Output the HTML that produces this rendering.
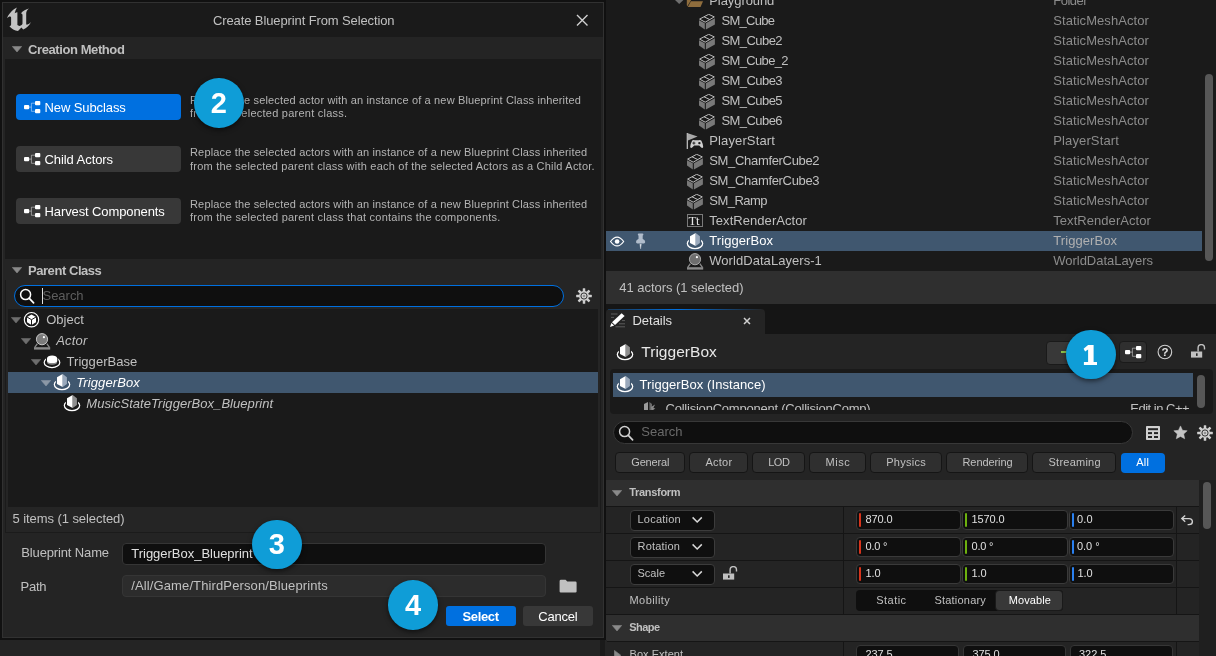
<!DOCTYPE html>
<html><head><meta charset="utf-8"><title>Create Blueprint From Selection</title>
<style>
html,body{margin:0;padding:0;background:#151515;}
#root{position:relative;width:1216px;height:656px;overflow:hidden;font-family:"Liberation Sans",sans-serif;}
#root div,#root span,#root svg{position:absolute;box-sizing:border-box;}
#root span{white-space:nowrap;line-height:1;}
</style></head><body><div id="root">
<div style="left:0px;top:0px;width:1216px;height:656px;background:#151515;"></div>
<div style="left:606px;top:0px;width:610px;height:271px;background:#1a1a1a;"></div>
<div style="left:606px;top:231px;width:596px;height:20px;background:#40576f;"></div>
<div style="left:1205px;top:74px;width:8px;height:187px;background:#575757;border-radius:4px;"></div>
<div style="left:606px;top:271px;width:610px;height:33px;background:#2f2f2f;"></div>
<div style="left:606px;top:304px;width:610px;height:30px;background:#151515;"></div>
<div style="left:606px;top:309px;width:159px;height:25px;background:#242424;border-radius:4px 4px 0 0;"></div>
<div style="left:608px;top:309px;width:155px;height:1.2px;background:linear-gradient(90deg,rgba(0,112,224,.25),#0070e0 45%,rgba(0,112,224,0));"></div>
<div style="left:606px;top:334px;width:610px;height:322px;background:#242424;"></div>
<div style="left:609.5px;top:369px;width:603.5px;height:45px;background:#1a1a1a;border-radius:4px;"></div>
<div style="left:613px;top:373px;width:580px;height:24px;background:#40576f;"></div>
<div style="left:1197px;top:375px;width:8px;height:33px;background:#575757;border-radius:4px;"></div>
<div style="left:1046px;top:341px;width:60px;height:24px;background:#383838;border-radius:4px;border:1px solid #1a1a1a;"></div>
<div style="left:1119px;top:341px;width:28px;height:22px;background:#2f2f2f;border-radius:4px;border:1px solid #1a1a1a;"></div>
<div style="left:613px;top:421.3px;width:519.5px;height:22.5px;background:#0f0f0f;border-radius:12px;border:1px solid #383838;"></div>
<div style="left:615px;top:452px;width:70px;height:21px;background:#2f2f2f;border-radius:4px;border:1px solid #151515;"></div>
<div style="left:689px;top:452px;width:59px;height:21px;background:#2f2f2f;border-radius:4px;border:1px solid #151515;"></div>
<div style="left:752px;top:452px;width:53px;height:21px;background:#2f2f2f;border-radius:4px;border:1px solid #151515;"></div>
<div style="left:809px;top:452px;width:57px;height:21px;background:#2f2f2f;border-radius:4px;border:1px solid #151515;"></div>
<div style="left:870px;top:452px;width:72px;height:21px;background:#2f2f2f;border-radius:4px;border:1px solid #151515;"></div>
<div style="left:946px;top:452px;width:82px;height:21px;background:#2f2f2f;border-radius:4px;border:1px solid #151515;"></div>
<div style="left:1032px;top:452px;width:84px;height:21px;background:#2f2f2f;border-radius:4px;border:1px solid #151515;"></div>
<div style="left:1120.5px;top:452.6px;width:44.0px;height:20px;background:#0070e0;border-radius:4px;"></div>
<div style="left:606px;top:480px;width:593px;height:176px;background:#151515;"></div>
<div style="left:606px;top:480px;width:593px;height:26px;background:#2f2f2f;"></div>
<div style="left:606px;top:507px;width:237px;height:26px;background:#242424;"></div>
<div style="left:844px;top:507px;width:332px;height:26px;background:#242424;"></div>
<div style="left:1177px;top:507px;width:22px;height:26px;background:#242424;"></div>
<div style="left:606px;top:534px;width:237px;height:26px;background:#242424;"></div>
<div style="left:844px;top:534px;width:332px;height:26px;background:#242424;"></div>
<div style="left:1177px;top:534px;width:22px;height:26px;background:#242424;"></div>
<div style="left:606px;top:561px;width:237px;height:26px;background:#242424;"></div>
<div style="left:844px;top:561px;width:332px;height:26px;background:#242424;"></div>
<div style="left:1177px;top:561px;width:22px;height:26px;background:#242424;"></div>
<div style="left:606px;top:588px;width:237px;height:26px;background:#242424;"></div>
<div style="left:844px;top:588px;width:332px;height:26px;background:#242424;"></div>
<div style="left:1177px;top:588px;width:22px;height:26px;background:#242424;"></div>
<div style="left:606px;top:615px;width:593px;height:26px;background:#2f2f2f;"></div>
<div style="left:606px;top:642px;width:237px;height:14px;background:#242424;"></div>
<div style="left:844px;top:642px;width:332px;height:14px;background:#242424;"></div>
<div style="left:1177px;top:642px;width:22px;height:14px;background:#242424;"></div>
<div style="left:1199px;top:480px;width:17px;height:176px;background:#1f1f1f;"></div>
<div style="left:1203px;top:482px;width:8px;height:47px;background:#575757;border-radius:4px;"></div>
<div style="left:604px;top:0px;width:2.2px;height:656px;background:#101010;"></div>
<div style="left:629.5px;top:509.5px;width:85px;height:21px;background:#0f0f0f;border-radius:4px;border:1px solid #3c3c3c;"></div>
<div style="left:629.5px;top:536.5px;width:85px;height:21px;background:#0f0f0f;border-radius:4px;border:1px solid #3c3c3c;"></div>
<div style="left:629.5px;top:563.5px;width:85px;height:21px;background:#0f0f0f;border-radius:4px;border:1px solid #3c3c3c;"></div>
<div style="left:855.8px;top:510px;width:105.5px;height:20px;background:#0f0f0f;border-radius:4px;border:1px solid #3a3a3a;"></div>
<div style="left:858.5999999999999px;top:513.2px;width:2.2px;height:13.4px;background:#d8341c;border-radius:1px;"></div>
<div style="left:962.4px;top:510px;width:105.19999999999993px;height:20px;background:#0f0f0f;border-radius:4px;border:1px solid #3a3a3a;"></div>
<div style="left:965.1999999999999px;top:513.2px;width:2.2px;height:13.4px;background:#6db10e;border-radius:1px;"></div>
<div style="left:1068.8px;top:510px;width:105.0px;height:20px;background:#0f0f0f;border-radius:4px;border:1px solid #3a3a3a;"></div>
<div style="left:1071.6px;top:513.2px;width:2.2px;height:13.4px;background:#2a80f0;border-radius:1px;"></div>
<div style="left:855.8px;top:537px;width:105.5px;height:20px;background:#0f0f0f;border-radius:4px;border:1px solid #3a3a3a;"></div>
<div style="left:858.5999999999999px;top:540.2px;width:2.2px;height:13.4px;background:#d8341c;border-radius:1px;"></div>
<div style="left:962.4px;top:537px;width:105.19999999999993px;height:20px;background:#0f0f0f;border-radius:4px;border:1px solid #3a3a3a;"></div>
<div style="left:965.1999999999999px;top:540.2px;width:2.2px;height:13.4px;background:#6db10e;border-radius:1px;"></div>
<div style="left:1068.8px;top:537px;width:105.0px;height:20px;background:#0f0f0f;border-radius:4px;border:1px solid #3a3a3a;"></div>
<div style="left:1071.6px;top:540.2px;width:2.2px;height:13.4px;background:#2a80f0;border-radius:1px;"></div>
<div style="left:855.8px;top:564px;width:105.5px;height:20px;background:#0f0f0f;border-radius:4px;border:1px solid #3a3a3a;"></div>
<div style="left:858.5999999999999px;top:567.2px;width:2.2px;height:13.4px;background:#d8341c;border-radius:1px;"></div>
<div style="left:962.4px;top:564px;width:105.19999999999993px;height:20px;background:#0f0f0f;border-radius:4px;border:1px solid #3a3a3a;"></div>
<div style="left:965.1999999999999px;top:567.2px;width:2.2px;height:13.4px;background:#6db10e;border-radius:1px;"></div>
<div style="left:1068.8px;top:564px;width:105.0px;height:20px;background:#0f0f0f;border-radius:4px;border:1px solid #3a3a3a;"></div>
<div style="left:1071.6px;top:567.2px;width:2.2px;height:13.4px;background:#2a80f0;border-radius:1px;"></div>
<div style="left:856px;top:645px;width:103px;height:20px;background:#0f0f0f;border-radius:4px;border:1px solid #363636;"></div>
<div style="left:963px;top:645px;width:103px;height:20px;background:#0f0f0f;border-radius:4px;border:1px solid #363636;"></div>
<div style="left:1070px;top:645px;width:103px;height:20px;background:#0f0f0f;border-radius:4px;border:1px solid #363636;"></div>
<div style="left:856px;top:590px;width:207px;height:21px;background:#0f0f0f;border-radius:4px;"></div>
<div style="left:995px;top:590px;width:68px;height:21px;background:#383838;border-radius:4px;border:1px solid #1a1a1a;"></div>
<div style="left:0px;top:0px;width:604px;height:640px;background:#111111;"></div>
<div style="left:0px;top:640px;width:606.5px;height:16px;background:#242424;"></div>
<div style="left:600px;top:640px;width:5px;height:16px;background:#1a1a1a;"></div>
<div style="left:2px;top:2px;width:602px;height:636px;background:#313131;"></div>
<div style="left:3px;top:3px;width:600px;height:634px;background:#242424;"></div>
<div style="left:3px;top:3px;width:600px;height:34px;background:#1a1a1a;"></div>
<div style="left:5px;top:37px;width:596px;height:22px;background:#242424;"></div>
<div style="left:5px;top:59px;width:596px;height:200px;background:#1a1a1a;"></div>
<div style="left:5px;top:259px;width:596px;height:21px;background:#242424;"></div>
<div style="left:5px;top:280px;width:596px;height:253px;background:#252525;border:1px solid #1b1b1b;border-top:none;"></div>
<div style="left:8px;top:309px;width:590px;height:198px;background:#1a1a1a;"></div>
<div style="left:8px;top:372px;width:590px;height:21px;background:#40576f;"></div>
<div style="left:14px;top:284.6px;width:550px;height:22.4px;background:#0f0f0f;border-radius:12px;border:1px solid #0070e0;"></div>
<div style="left:42px;top:288px;width:1px;height:15.5px;background:#e0e0e0;"></div>
<div style="left:16px;top:94px;width:165px;height:26px;background:#0070e0;border-radius:4px;"></div>
<div style="left:16px;top:146px;width:165px;height:26px;background:#383838;border-radius:4px;"></div>
<div style="left:16px;top:198px;width:165px;height:26px;background:#383838;border-radius:4px;"></div>
<div style="left:122px;top:543px;width:424px;height:22px;background:#0f0f0f;border-radius:4px;border:1px solid #353535;"></div>
<div style="left:122px;top:575px;width:424px;height:22px;background:#2c2c2c;border-radius:4px;border:1px solid #353535;"></div>
<div style="left:446px;top:605.6px;width:70px;height:20.6px;background:#0070e0;border-radius:3px;"></div>
<div style="left:522.5px;top:605.6px;width:70.5px;height:20.6px;background:#383838;border-radius:3px;"></div>
<div style="left:687px;top:214px;width:16px;height:13px;background:transparent;border:1px solid #7a7a7a;"></div>
<div style="left:1061px;top:351px;width:12px;height:1.6px;background:#8bc24a;"></div>
<div style="left:0;top:0;width:1216px;height:656px;will-change:transform;">
<span style="left:709.25px;top:-6.00px;font-size:13px;color:#c0c0c0;letter-spacing:-0.076px;">Playground</span>
<span style="left:1053.25px;top:-6.00px;font-size:13px;color:#8c8c8c;letter-spacing:-0.502px;">Folder</span>
<span style="left:721.50px;top:14.00px;font-size:13px;color:#c0c0c0;letter-spacing:-0.702px;">SM_Cube</span>
<span style="left:1053.25px;top:14.00px;font-size:13px;color:#8c8c8c;letter-spacing:0.067px;">StaticMeshActor</span>
<span style="left:721.50px;top:34.00px;font-size:13px;color:#c0c0c0;letter-spacing:-0.564px;">SM_Cube2</span>
<span style="left:1053.25px;top:34.00px;font-size:13px;color:#8c8c8c;letter-spacing:0.067px;">StaticMeshActor</span>
<span style="left:721.50px;top:54.00px;font-size:13px;color:#c0c0c0;letter-spacing:-0.648px;">SM_Cube_2</span>
<span style="left:1053.25px;top:54.00px;font-size:13px;color:#8c8c8c;letter-spacing:0.067px;">StaticMeshActor</span>
<span style="left:721.50px;top:74.00px;font-size:13px;color:#c0c0c0;letter-spacing:-0.564px;">SM_Cube3</span>
<span style="left:1053.25px;top:74.00px;font-size:13px;color:#8c8c8c;letter-spacing:0.067px;">StaticMeshActor</span>
<span style="left:721.50px;top:94.00px;font-size:13px;color:#c0c0c0;letter-spacing:-0.564px;">SM_Cube5</span>
<span style="left:1053.25px;top:94.00px;font-size:13px;color:#8c8c8c;letter-spacing:0.067px;">StaticMeshActor</span>
<span style="left:721.50px;top:114.00px;font-size:13px;color:#c0c0c0;letter-spacing:-0.564px;">SM_Cube6</span>
<span style="left:1053.25px;top:114.00px;font-size:13px;color:#8c8c8c;letter-spacing:0.067px;">StaticMeshActor</span>
<span style="left:709.25px;top:134.00px;font-size:13px;color:#c0c0c0;letter-spacing:0.129px;">PlayerStart</span>
<span style="left:1053.25px;top:134.00px;font-size:13px;color:#8c8c8c;letter-spacing:0.129px;">PlayerStart</span>
<span style="left:709.25px;top:154.00px;font-size:13px;color:#c0c0c0;letter-spacing:-0.324px;">SM_ChamferCube2</span>
<span style="left:1053.25px;top:154.00px;font-size:13px;color:#8c8c8c;letter-spacing:0.067px;">StaticMeshActor</span>
<span style="left:709.25px;top:174.00px;font-size:13px;color:#c0c0c0;letter-spacing:-0.324px;">SM_ChamferCube3</span>
<span style="left:1053.25px;top:174.00px;font-size:13px;color:#8c8c8c;letter-spacing:0.067px;">StaticMeshActor</span>
<span style="left:709.25px;top:194.00px;font-size:13px;color:#c0c0c0;letter-spacing:-0.512px;">SM_Ramp</span>
<span style="left:1053.25px;top:194.00px;font-size:13px;color:#8c8c8c;letter-spacing:0.067px;">StaticMeshActor</span>
<span style="left:709.25px;top:214.00px;font-size:13px;color:#c0c0c0;letter-spacing:0.055px;">TextRenderActor</span>
<span style="left:1053.25px;top:214.00px;font-size:13px;color:#8c8c8c;letter-spacing:0.055px;">TextRenderActor</span>
<span style="left:709.25px;top:234.00px;font-size:13px;color:#ffffff;letter-spacing:0.082px;">TriggerBox</span>
<span style="left:1053.25px;top:234.00px;font-size:13px;color:#b0b0b0;letter-spacing:0.082px;">TriggerBox</span>
<span style="left:709.25px;top:254.00px;font-size:13px;color:#c0c0c0;letter-spacing:0.052px;">WorldDataLayers-1</span>
<span style="left:1053.25px;top:254.00px;font-size:13px;color:#8c8c8c;letter-spacing:-0.025px;">WorldDataLayers</span>
<span style="left:619.25px;top:281.00px;font-size:13px;color:#c0c0c0;letter-spacing:-0.032px;">41 actors (1 selected)</span>
<span style="left:632.50px;top:314.00px;font-size:13px;color:#e0e0e0;letter-spacing:-0.025px;">Details</span>
<span style="left:641.25px;top:344.00px;font-size:15.5px;color:#e8e8e8;letter-spacing:0.041px;">TriggerBox</span>
<span style="left:639.50px;top:378.00px;font-size:13px;color:#ffffff;letter-spacing:0.079px;">TriggerBox (Instance)</span>
<div style="left:610px;top:397px;width:590px;height:12.5px;overflow:hidden;"><span style="left:55.50px;top:5.00px;font-size:13px;color:#c0c0c0;letter-spacing:-0.222px;">CollisionComponent (CollisionComp)</span></div>
<div style="left:1100px;top:397px;width:95px;height:12.5px;overflow:hidden;"><span style="left:30.25px;top:5.00px;font-size:13px;color:#c0c0c0;letter-spacing:-0.498px;">Edit in C++</span></div>
<span style="left:641.25px;top:425.00px;font-size:13px;color:#6a6a6a;letter-spacing:0.029px;">Search</span>
<span style="left:631.25px;top:457.00px;font-size:11px;color:#c0c0c0;letter-spacing:-0.173px;">General</span>
<span style="left:705.50px;top:457.00px;font-size:11px;color:#c0c0c0;letter-spacing:0.228px;">Actor</span>
<span style="left:768.25px;top:457.00px;font-size:11px;color:#c0c0c0;letter-spacing:-0.512px;">LOD</span>
<span style="left:825.50px;top:457.00px;font-size:11px;color:#c0c0c0;letter-spacing:0.580px;">Misc</span>
<span style="left:886.25px;top:457.00px;font-size:11px;color:#c0c0c0;letter-spacing:0.282px;">Physics</span>
<span style="left:962.50px;top:457.00px;font-size:11px;color:#c0c0c0;letter-spacing:-0.083px;">Rendering</span>
<span style="left:1048.50px;top:457.00px;font-size:11px;color:#c0c0c0;letter-spacing:0.245px;">Streaming</span>
<span style="left:1136.25px;top:457.00px;font-size:11px;color:#ffffff;letter-spacing:0.183px;">All</span>
<span style="left:629.25px;top:487.00px;font-size:11px;color:#c0c0c0;font-weight:bold;letter-spacing:-0.306px;">Transform</span>
<span style="left:637.50px;top:514.00px;font-size:11px;color:#c0c0c0;letter-spacing:0.215px;">Location</span>
<span style="left:637.50px;top:541.00px;font-size:11px;color:#c0c0c0;letter-spacing:0.195px;">Rotation</span>
<span style="left:637.50px;top:568.00px;font-size:11px;color:#c0c0c0;letter-spacing:0.017px;">Scale</span>
<span style="left:629.50px;top:595.00px;font-size:11px;color:#c0c0c0;letter-spacing:0.436px;">Mobility</span>
<span style="left:629.25px;top:622.00px;font-size:11px;color:#c0c0c0;font-weight:bold;letter-spacing:-0.541px;">Shape</span>
<span style="left:629.50px;top:649.00px;font-size:11px;color:#c0c0c0;letter-spacing:0.044px;">Box Extent</span>
<span style="left:865.50px;top:514.00px;font-size:11px;color:#e0e0e0;letter-spacing:-0.108px;">870.0</span>
<span style="left:971.50px;top:514.00px;font-size:11px;color:#e0e0e0;letter-spacing:-0.111px;">1570.0</span>
<span style="left:1077.00px;top:514.00px;font-size:11px;color:#e0e0e0;letter-spacing:0.152px;">0.0</span>
<span style="left:865.50px;top:541.00px;font-size:11px;color:#e0e0e0;letter-spacing:-0.225px;">0.0 °</span>
<span style="left:971.50px;top:541.00px;font-size:11px;color:#e0e0e0;letter-spacing:-0.225px;">0.0 °</span>
<span style="left:1077.00px;top:541.00px;font-size:11px;color:#e0e0e0;letter-spacing:-0.037px;">0.0 °</span>
<span style="left:865.50px;top:568.00px;font-size:11px;color:#e0e0e0;letter-spacing:-0.098px;">1.0</span>
<span style="left:971.50px;top:568.00px;font-size:11px;color:#e0e0e0;letter-spacing:-0.098px;">1.0</span>
<span style="left:1077.50px;top:568.00px;font-size:11px;color:#e0e0e0;letter-spacing:-0.098px;">1.0</span>
<span style="left:876.25px;top:595.00px;font-size:11px;color:#c0c0c0;letter-spacing:0.467px;">Static</span>
<span style="left:934.50px;top:595.00px;font-size:11px;color:#c0c0c0;letter-spacing:0.202px;">Stationary</span>
<span style="left:1008.75px;top:595.00px;font-size:11px;color:#ffffff;letter-spacing:0.087px;">Movable</span>
<span style="left:865.50px;top:649.00px;font-size:11px;color:#e0e0e0;letter-spacing:-0.108px;">237.5</span>
<span style="left:972.50px;top:649.00px;font-size:11px;color:#e0e0e0;letter-spacing:-0.108px;">375.0</span>
<span style="left:1079.00px;top:649.00px;font-size:11px;color:#e0e0e0;letter-spacing:-0.045px;">322.5</span>
<span style="left:213.00px;top:14.00px;font-size:13px;color:#c0c0c0;letter-spacing:-0.113px;">Create Blueprint From Selection</span>
<span style="left:28.00px;top:43.00px;font-size:13px;color:#c0c0c0;font-weight:bold;letter-spacing:-0.408px;">Creation Method</span>
<span style="left:44.50px;top:101.00px;font-size:13px;color:#ffffff;letter-spacing:-0.093px;">New Subclass</span>
<span style="left:44.50px;top:153.00px;font-size:13px;color:#ffffff;letter-spacing:-0.070px;">Child Actors</span>
<span style="left:44.50px;top:205.00px;font-size:13px;color:#ffffff;letter-spacing:-0.104px;">Harvest Components</span>
<span style="left:190.00px;top:95.00px;font-size:11px;color:#b4b4b4;letter-spacing:0.152px;">Replace the selected actor with an instance of a new Blueprint Class inherited</span>
<span style="left:190.00px;top:108.00px;font-size:11px;color:#b4b4b4;letter-spacing:0.243px;">from the selected parent class.</span>
<span style="left:190.00px;top:147.00px;font-size:11px;color:#b4b4b4;letter-spacing:0.160px;">Replace the selected actors with an instance of a new Blueprint Class inherited</span>
<span style="left:190.00px;top:161.00px;font-size:11px;color:#b4b4b4;letter-spacing:0.219px;">from the selected parent class with each of the selected Actors as a Child Actor.</span>
<span style="left:190.00px;top:199.00px;font-size:11px;color:#b4b4b4;letter-spacing:0.160px;">Replace the selected actors with an instance of a new Blueprint Class inherited</span>
<span style="left:190.00px;top:212.00px;font-size:11px;color:#b4b4b4;letter-spacing:0.234px;">from the selected parent class that contains the components.</span>
<span style="left:28.00px;top:264.00px;font-size:13px;color:#c0c0c0;font-weight:bold;letter-spacing:-0.447px;">Parent Class</span>
<span style="left:42.50px;top:289.00px;font-size:13px;color:#5e5e5e;letter-spacing:-0.021px;">Search</span>
<span style="left:46.25px;top:313.00px;font-size:13px;color:#c0c0c0;letter-spacing:0.004px;">Object</span>
<span style="left:56.25px;top:334.00px;font-size:13px;color:#c0c0c0;font-style:italic;letter-spacing:0.189px;">Actor</span>
<span style="left:66.50px;top:355.00px;font-size:13px;color:#c0c0c0;letter-spacing:0.052px;">TriggerBase</span>
<span style="left:76.25px;top:376.00px;font-size:13px;color:#ffffff;font-style:italic;letter-spacing:0.108px;">TriggerBox</span>
<span style="left:86.25px;top:397.00px;font-size:13px;color:#c0c0c0;font-style:italic;letter-spacing:0.048px;">MusicStateTriggerBox_Blueprint</span>
<span style="left:12.50px;top:512.00px;font-size:13px;color:#c0c0c0;letter-spacing:-0.070px;">5 items (1 selected)</span>
<span style="left:21.25px;top:546.00px;font-size:13px;color:#c0c0c0;letter-spacing:-0.135px;">Blueprint Name</span>
<span style="left:131.25px;top:547.00px;font-size:13px;color:#e0e0e0;letter-spacing:-0.015px;">TriggerBox_Blueprint</span>
<span style="left:20.50px;top:580.00px;font-size:13px;color:#c0c0c0;letter-spacing:-0.217px;">Path</span>
<span style="left:131.25px;top:579.00px;font-size:13px;color:#c0c0c0;letter-spacing:0.119px;">/All/Game/ThirdPerson/Blueprints</span>
<span style="left:462.50px;top:610.00px;font-size:13px;color:#ffffff;font-weight:bold;letter-spacing:-0.342px;">Select</span>
<span style="left:538.25px;top:610.00px;font-size:13px;color:#ffffff;letter-spacing:-0.224px;">Cancel</span>
</div>
<div style="left:0;top:0;width:1216px;height:656px;will-change:transform;">
<div style="left:1066.2px;top:329.9px;width:49.6px;height:49.6px;border-radius:50%;background:#0f9dd7;box-shadow:0 2px 5px rgba(0,0,0,.55);"></div>
<svg style="left:1081px;top:342.7px;" width="20" height="24" viewBox="-10 -12 20 24"><path d="M-2.9 -10 H2.6 V7 H6 V10 H-7.1 V7 H-2.9 V-5.6 L-5.9 -3.4 L-7.4 -6.2 Z" fill="#fff"/></svg>
<div style="left:194.0px;top:78.2px;width:49.6px;height:49.6px;border-radius:50%;background:#0f9dd7;box-shadow:0 2px 5px rgba(0,0,0,.55);"></div>
<span style="left:198.8px;top:89px;width:40px;text-align:center;font-size:29px;font-weight:bold;color:#fff;">2</span>
<div style="left:252.09999999999997px;top:519.6px;width:49.6px;height:49.6px;border-radius:50%;background:#0f9dd7;box-shadow:0 2px 5px rgba(0,0,0,.55);"></div>
<span style="left:256.9px;top:530px;width:40px;text-align:center;font-size:29px;font-weight:bold;color:#fff;">3</span>
<div style="left:388.2px;top:580.2px;width:49.6px;height:49.6px;border-radius:50%;background:#0f9dd7;box-shadow:0 2px 5px rgba(0,0,0,.55);"></div>
<span style="left:393px;top:591px;width:40px;text-align:center;font-size:29px;font-weight:bold;color:#fff;">4</span>
<svg style="left:6px;top:6px;" width="27" height="27" viewBox="0 0 27 27"><g fill="#c4c4c4"><path d="M10.9 1.6 C7.6 3 3.6 6.8 1 12 C2.2 11 3.2 10.3 4.2 10.4 C4.9 10.5 5.1 11 5.1 11.8 L5.1 18.2 C5.1 19.3 4.6 19.9 3.4 20.3 C5.6 23 8.6 24.6 12 25 L15.4 21.6 L17.2 23.4 C20.6 22 23.4 19.6 25 16 C23.8 17.3 22.6 18.2 21.5 18.6 C20.6 18.9 20.2 18.3 20.2 17.4 L20.2 7.6 C20.2 5.6 21.2 4 23 2.6 C20 3.2 17.2 4.8 14.8 7.4 C15.9 7.4 16.5 7.9 16.5 9 L16.5 17.6 C16.5 18.7 15.2 19.9 13.6 19.9 C12.5 19.9 12 19.6 11.4 19.1 L11.4 6.2 C10.6 6.2 9.6 6.6 8.7 7.2 C9.2 5.2 9.9 3.2 10.9 1.6 Z"/></g></svg>
<svg style="left:575.75px;top:13.75px;" width="12.5" height="12.5" viewBox="0 0 12.5 12.5"><path d="M1 1 L11.5 11.5 M11.5 1 L1 11.5" stroke="#d0d0d0" stroke-width="1.4" fill="none"/></svg>
<svg style="left:12.3px;top:46px;" width="10" height="8" viewBox="0 0 10 8"><path d="M0.3 0.4 L9.7 0.4 L5.0 6.0 Z" fill="#8a8a8a" stroke="#8a8a8a" stroke-width="0.6" stroke-linejoin="round"/></svg>
<svg style="left:12.3px;top:267px;" width="10" height="8" viewBox="0 0 10 8"><path d="M0.3 0.4 L9.7 0.4 L5.0 6.0 Z" fill="#8a8a8a" stroke="#8a8a8a" stroke-width="0.6" stroke-linejoin="round"/></svg>
<svg style="left:24px;top:100.9px;" width="17" height="13" viewBox="0 0 17 13"><rect x="0" y="3.9" width="5.2" height="4.3" rx="1" fill="#fff"/><rect x="11" y="0" width="5.3" height="4.2" rx="1" fill="#fff"/><rect x="11" y="8.1" width="5.3" height="4.2" rx="1" fill="#fff"/><path d="M5 6.1 H7.4 M7.4 2.2 V10.3 M7.4 2.2 H11 M7.4 10.3 H11" stroke="#fff" stroke-opacity=".65" stroke-width="0.7" fill="none"/></svg>
<svg style="left:24px;top:152.9px;" width="17" height="13" viewBox="0 0 17 13"><rect x="0" y="3.9" width="5.2" height="4.3" rx="1" fill="#fff"/><rect x="11" y="0" width="5.3" height="4.2" rx="1" fill="#fff"/><rect x="11" y="8.1" width="5.3" height="4.2" rx="1" fill="#fff"/><path d="M5 6.1 H7.4 M7.4 2.2 V10.3 M7.4 2.2 H11 M7.4 10.3 H11" stroke="#fff" stroke-opacity=".65" stroke-width="0.7" fill="none"/></svg>
<svg style="left:24px;top:204.9px;" width="17" height="13" viewBox="0 0 17 13"><rect x="0" y="3.9" width="5.2" height="4.3" rx="1" fill="#fff"/><rect x="11" y="0" width="5.3" height="4.2" rx="1" fill="#fff"/><rect x="11" y="8.1" width="5.3" height="4.2" rx="1" fill="#fff"/><path d="M5 6.1 H7.4 M7.4 2.2 V10.3 M7.4 2.2 H11 M7.4 10.3 H11" stroke="#fff" stroke-opacity=".65" stroke-width="0.7" fill="none"/></svg>
<svg style="left:17.5px;top:287px;" width="20" height="20" viewBox="0 0 20 20"><circle cx="7.6" cy="7.6" r="5" fill="none" stroke="#fff" stroke-width="1.5"/><path d="M11.3 11.3 L15.6 15.8" stroke="#fff" stroke-width="1.7" stroke-linecap="round"/></svg>
<svg style="left:575px;top:287px;" width="18" height="18" viewBox="0 0 18 18"><g transform="translate(9 9)"><rect x="-1.25" y="-7.8" width="2.5" height="3.6" rx=".5" transform="rotate(0)" fill="#d0d0d0"/><rect x="-1.25" y="-7.8" width="2.5" height="3.6" rx=".5" transform="rotate(45)" fill="#d0d0d0"/><rect x="-1.25" y="-7.8" width="2.5" height="3.6" rx=".5" transform="rotate(90)" fill="#d0d0d0"/><rect x="-1.25" y="-7.8" width="2.5" height="3.6" rx=".5" transform="rotate(135)" fill="#d0d0d0"/><rect x="-1.25" y="-7.8" width="2.5" height="3.6" rx=".5" transform="rotate(180)" fill="#d0d0d0"/><rect x="-1.25" y="-7.8" width="2.5" height="3.6" rx=".5" transform="rotate(225)" fill="#d0d0d0"/><rect x="-1.25" y="-7.8" width="2.5" height="3.6" rx=".5" transform="rotate(270)" fill="#d0d0d0"/><rect x="-1.25" y="-7.8" width="2.5" height="3.6" rx=".5" transform="rotate(315)" fill="#d0d0d0"/><circle r="5" fill="#d0d0d0"/><circle r="3.1" fill="none" stroke="#242424" stroke-width="0.9"/><circle r="1.3" fill="#909090"/></g></svg>
<svg style="left:10.8px;top:316.8px;" width="10" height="8" viewBox="0 0 10 8"><path d="M0.3 0.4 L9.7 0.4 L5.0 6.0 Z" fill="#6e6e6e" stroke="#6e6e6e" stroke-width="0.6" stroke-linejoin="round"/></svg>
<svg style="left:20.8px;top:337.8px;" width="10" height="8" viewBox="0 0 10 8"><path d="M0.3 0.4 L9.7 0.4 L5.0 6.0 Z" fill="#6e6e6e" stroke="#6e6e6e" stroke-width="0.6" stroke-linejoin="round"/></svg>
<svg style="left:30.8px;top:358.8px;" width="10" height="8" viewBox="0 0 10 8"><path d="M0.3 0.4 L9.7 0.4 L5.0 6.0 Z" fill="#6e6e6e" stroke="#6e6e6e" stroke-width="0.6" stroke-linejoin="round"/></svg>
<svg style="left:40.8px;top:379.8px;" width="10" height="8" viewBox="0 0 10 8"><path d="M0.3 0.4 L9.7 0.4 L5.0 6.0 Z" fill="#8c98a6" stroke="#8c98a6" stroke-width="0.6" stroke-linejoin="round"/></svg>
<svg style="left:23px;top:311px;" width="18" height="18" viewBox="0 0 18 18"><circle cx="8.5" cy="8.7" r="7.2" fill="none" stroke="#fff" stroke-width="1.1"/><path d="M8.5 3.4 L13 6 L13 11.3 L8.5 14 L4 11.3 L4 6 Z" fill="#fff"/><path d="M8.5 14 V8.7 L4 6 M8.5 8.7 L13 6" stroke="#1a1a1a" stroke-width="1" fill="none"/></svg>
<svg style="left:33px;top:331.5px;" width="18" height="19" viewBox="0 0 18 19"><path d="M1 15.2 H17.2 V17.6 H1 Z" fill="#8a8a8a"/><path d="M4.4 11.6 L1.6 15.6 M13.8 11.6 L16.6 15.6" stroke="#8a8a8a" stroke-width="1.3"/><circle cx="9" cy="7.2" r="5.6" fill="#7c7c7c" stroke="#d4d4d4" stroke-width="0.9"/><circle cx="10.9" cy="5.2" r="1.1" fill="#fff"/></svg>
<svg style="left:43px;top:353px;" width="19" height="17" viewBox="0 0 19 17"><ellipse cx="9" cy="9.4" rx="7.8" ry="5.2" fill="none" stroke="#fff" stroke-width="1.25"/><path d="M4 5.4 V9 A5.1 2.9 0 0 0 14.2 9 V5.4 A5.1 3.2 0 0 0 4 5.4 Z" fill="#1a1a1a" stroke="#1a1a1a" stroke-width="2"/><path d="M4 5.6 V9 A5.1 2.7 0 0 0 14.2 9 V5.6 Z" fill="#8a8a8a"/><path d="M4 5.4 V7.4 A5.1 2.7 0 0 0 14.2 7.4 V5.4 Z" fill="#fff"/><ellipse cx="9.1" cy="5.4" rx="5.1" ry="3" fill="#fff"/></svg>
<svg style="left:53px;top:374.0px;" width="19" height="18" viewBox="0 0 19 18"><g transform="translate(1 0)"><ellipse cx="8" cy="10.6" rx="7.7" ry="5" fill="none" stroke="#fff" stroke-width="1.25"/><path d="M8.5 0.1 L3 3.3 L3 10 L8.5 12.9 L12.9 10 L12.9 3.3 Z" fill="#40576f" stroke="#40576f" stroke-width="2.2" stroke-linejoin="round"/><path d="M8.7 0.1 L3 3.3 L3 10 L8.7 12.9 Z" fill="#fff"/><path d="M8.7 0.1 L12.9 3.3 L12.9 10 L8.7 12.9 Z" fill="#9aa9bc"/></g></svg>
<svg style="left:63px;top:395.0px;" width="19" height="18" viewBox="0 0 19 18"><g transform="translate(1 0)"><ellipse cx="8" cy="10.6" rx="7.7" ry="5" fill="none" stroke="#fff" stroke-width="1.25"/><path d="M8.5 0.1 L3 3.3 L3 10 L8.5 12.9 L12.9 10 L12.9 3.3 Z" fill="#1a1a1a" stroke="#1a1a1a" stroke-width="2.2" stroke-linejoin="round"/><path d="M8.7 0.1 L3 3.3 L3 10 L8.7 12.9 Z" fill="#fff"/><path d="M8.7 0.1 L12.9 3.3 L12.9 10 L8.7 12.9 Z" fill="#8f8f8f"/></g></svg>
<svg style="left:559px;top:579px;" width="19" height="15" viewBox="0 0 19 15"><path d="M0.6 2.2 Q0.6 0.8 2 0.8 H6.6 L8.3 2.6 H16.4 Q17.6 2.6 17.6 3.8 V12.6 Q17.6 13.6 16.4 13.6 H1.8 Q0.6 13.6 0.6 12.6 Z" fill="#c0c0c0"/></svg>
<svg style="left:675px;top:0px;" width="9" height="5" viewBox="0 0 9 5"><path d="M0 0 H8.4 L4.2 4 Z" fill="#6e6e6e"/></svg>
<svg style="left:686px;top:0px;" width="18" height="8" viewBox="0 0 18 8"><path d="M1.8 6.9 L14.5 6.9 L17 1.2 L4.9 1.2 Z" fill="#8f6d3d"/><path d="M0.8 0 H5.2 L1.2 6.4 L0.8 5 Z" fill="#8f6d3d"/></svg>
<svg style="left:699px;top:14px;" width="17" height="17" viewBox="0 0 17 17"><path d="M0.6 5.1 L9.7 0.3 L15.3 2.9 L6.2 8.2 Z" fill="none" stroke="#c4c4c4" stroke-width="0.95" stroke-linejoin="round"/><path d="M5 2.8 L10.7 5.5" stroke="#c4c4c4" stroke-width="0.95"/><path d="M0 6.3 L5.8 9.3 L5.8 15.4 L0 11.6 Z" fill="#787878"/><path d="M6.9 9.3 L15.9 4.3 L15.9 10.4 L6.9 15.4 Z" fill="#787878"/></svg>
<svg style="left:699px;top:34px;" width="17" height="17" viewBox="0 0 17 17"><path d="M0.6 5.1 L9.7 0.3 L15.3 2.9 L6.2 8.2 Z" fill="none" stroke="#c4c4c4" stroke-width="0.95" stroke-linejoin="round"/><path d="M5 2.8 L10.7 5.5" stroke="#c4c4c4" stroke-width="0.95"/><path d="M0 6.3 L5.8 9.3 L5.8 15.4 L0 11.6 Z" fill="#787878"/><path d="M6.9 9.3 L15.9 4.3 L15.9 10.4 L6.9 15.4 Z" fill="#787878"/></svg>
<svg style="left:699px;top:54px;" width="17" height="17" viewBox="0 0 17 17"><path d="M0.6 5.1 L9.7 0.3 L15.3 2.9 L6.2 8.2 Z" fill="none" stroke="#c4c4c4" stroke-width="0.95" stroke-linejoin="round"/><path d="M5 2.8 L10.7 5.5" stroke="#c4c4c4" stroke-width="0.95"/><path d="M0 6.3 L5.8 9.3 L5.8 15.4 L0 11.6 Z" fill="#787878"/><path d="M6.9 9.3 L15.9 4.3 L15.9 10.4 L6.9 15.4 Z" fill="#787878"/></svg>
<svg style="left:699px;top:74px;" width="17" height="17" viewBox="0 0 17 17"><path d="M0.6 5.1 L9.7 0.3 L15.3 2.9 L6.2 8.2 Z" fill="none" stroke="#c4c4c4" stroke-width="0.95" stroke-linejoin="round"/><path d="M5 2.8 L10.7 5.5" stroke="#c4c4c4" stroke-width="0.95"/><path d="M0 6.3 L5.8 9.3 L5.8 15.4 L0 11.6 Z" fill="#787878"/><path d="M6.9 9.3 L15.9 4.3 L15.9 10.4 L6.9 15.4 Z" fill="#787878"/></svg>
<svg style="left:699px;top:94px;" width="17" height="17" viewBox="0 0 17 17"><path d="M0.6 5.1 L9.7 0.3 L15.3 2.9 L6.2 8.2 Z" fill="none" stroke="#c4c4c4" stroke-width="0.95" stroke-linejoin="round"/><path d="M5 2.8 L10.7 5.5" stroke="#c4c4c4" stroke-width="0.95"/><path d="M0 6.3 L5.8 9.3 L5.8 15.4 L0 11.6 Z" fill="#787878"/><path d="M6.9 9.3 L15.9 4.3 L15.9 10.4 L6.9 15.4 Z" fill="#787878"/></svg>
<svg style="left:699px;top:114px;" width="17" height="17" viewBox="0 0 17 17"><path d="M0.6 5.1 L9.7 0.3 L15.3 2.9 L6.2 8.2 Z" fill="none" stroke="#c4c4c4" stroke-width="0.95" stroke-linejoin="round"/><path d="M5 2.8 L10.7 5.5" stroke="#c4c4c4" stroke-width="0.95"/><path d="M0 6.3 L5.8 9.3 L5.8 15.4 L0 11.6 Z" fill="#787878"/><path d="M6.9 9.3 L15.9 4.3 L15.9 10.4 L6.9 15.4 Z" fill="#787878"/></svg>
<svg style="left:686.6px;top:154px;" width="17" height="17" viewBox="0 0 17 17"><path d="M0.6 5.1 L9.7 0.3 L15.3 2.9 L6.2 8.2 Z" fill="none" stroke="#c4c4c4" stroke-width="0.95" stroke-linejoin="round"/><path d="M5 2.8 L10.7 5.5" stroke="#c4c4c4" stroke-width="0.95"/><path d="M0 6.3 L5.8 9.3 L5.8 15.4 L0 11.6 Z" fill="#787878"/><path d="M6.9 9.3 L15.9 4.3 L15.9 10.4 L6.9 15.4 Z" fill="#787878"/></svg>
<svg style="left:686.6px;top:174px;" width="17" height="17" viewBox="0 0 17 17"><path d="M0.6 5.1 L9.7 0.3 L15.3 2.9 L6.2 8.2 Z" fill="none" stroke="#c4c4c4" stroke-width="0.95" stroke-linejoin="round"/><path d="M5 2.8 L10.7 5.5" stroke="#c4c4c4" stroke-width="0.95"/><path d="M0 6.3 L5.8 9.3 L5.8 15.4 L0 11.6 Z" fill="#787878"/><path d="M6.9 9.3 L15.9 4.3 L15.9 10.4 L6.9 15.4 Z" fill="#787878"/></svg>
<svg style="left:686.6px;top:194px;" width="17" height="17" viewBox="0 0 17 17"><path d="M0.6 5.1 L9.7 0.3 L15.3 2.9 L6.2 8.2 Z" fill="none" stroke="#c4c4c4" stroke-width="0.95" stroke-linejoin="round"/><path d="M5 2.8 L10.7 5.5" stroke="#c4c4c4" stroke-width="0.95"/><path d="M0 6.3 L5.8 9.3 L5.8 15.4 L0 11.6 Z" fill="#787878"/><path d="M6.9 9.3 L15.9 4.3 L15.9 10.4 L6.9 15.4 Z" fill="#787878"/></svg>
<svg style="left:686px;top:132px;" width="19" height="18" viewBox="0 0 19 18"><path d="M1.3 1 V17" stroke="#c8c8c8" stroke-width="1.2"/><path d="M1.9 1.2 L11.6 4.6 L1.9 8.4 Z" fill="#a8a8a8"/><path d="M6.2 8.6 Q7.2 7.6 8.6 8.2 H12.8 Q14.4 7.6 15.4 8.8 Q17 12 17.2 15 Q16.6 16.4 15.2 15.6 L13.2 13.6 H8.2 L6.2 15.6 Q4.8 16.4 4.2 15 Q4.4 12 6.2 8.6 Z" fill="#d0d0d0"/><path d="M7.9 9.6 V12.6 M6.4 11.1 H9.4" stroke="#1a1a1a" stroke-width=".9"/><circle cx="13.4" cy="11.1" r="1.2" fill="#1a1a1a"/></svg>
<span style="left:688.6px;top:214.3px;font-family:'Liberation Serif',serif;font-size:13px;color:#e4e4e4;letter-spacing:-0.6px;">Tt</span>
<svg style="left:686px;top:232.5px;" width="19" height="18" viewBox="0 0 19 18"><g transform="translate(1 0)"><ellipse cx="8" cy="10.6" rx="7.7" ry="5" fill="none" stroke="#fff" stroke-width="1.25"/><path d="M8.5 0.1 L3 3.3 L3 10 L8.5 12.9 L12.9 10 L12.9 3.3 Z" fill="#40576f" stroke="#40576f" stroke-width="2.2" stroke-linejoin="round"/><path d="M8.7 0.1 L3 3.3 L3 10 L8.7 12.9 Z" fill="#fff"/><path d="M8.7 0.1 L12.9 3.3 L12.9 10 L8.7 12.9 Z" fill="#9aa9bc"/></g></svg>
<svg style="left:686px;top:252px;" width="18" height="19" viewBox="0 0 18 19"><path d="M1 15.2 H17.2 V17.6 H1 Z" fill="#8a8a8a"/><path d="M4.4 11.6 L1.6 15.6 M13.8 11.6 L16.6 15.6" stroke="#8a8a8a" stroke-width="1.3"/><circle cx="9" cy="7.2" r="5.6" fill="#6e6e6e" stroke="#b0b0b0" stroke-width="0.9"/><circle cx="10.9" cy="5.2" r="1.1" fill="#fff"/></svg>
<svg style="left:609px;top:235px;" width="17" height="14" viewBox="0 0 17 14"><path d="M1.5 6.5 Q8.1 -2.4 14.7 6.5 Q8.1 15.4 1.5 6.5 Z" fill="none" stroke="#fff" stroke-width="1.2" stroke-linejoin="round"/><circle cx="8.1" cy="6.5" r="2.3" fill="#fff"/></svg>
<svg style="left:635px;top:233px;" width="11" height="17" viewBox="0 0 11 17"><rect x="2.8" y="0.4" width="5.6" height="2.2" rx="1" fill="#b0bccb"/><rect x="3.5" y="2" width="4.2" height="5" fill="#b0bccb"/><path d="M3.3 6 H7.9 Q10.2 7.2 10.2 9 Q10.2 10.4 8.8 10.4 H2.4 Q1 10.4 1 9 Q1 7.2 3.3 6 Z" fill="#b0bccb"/><path d="M4.9 11.2 H6.3 L5.6 15.8 Z" fill="#dfe4ea" stroke="#dfe4ea" stroke-width=".4"/></svg>
<svg style="left:609px;top:312px;" width="17" height="16" viewBox="0 0 17 16"><path d="M2 2 H8.5 M2 5.4 H5 M13 8.6 H16 M10 11.8 H16 M6.5 14.8 H16" stroke="#5c5c5c" stroke-width="1"/><path d="M12.6 1.2 L15.6 4 L6 13 L3 10.2 Z" fill="#fff"/><path d="M2.4 11 L5.2 13.6 L1 15 Z" fill="#fff"/></svg>
<svg style="left:743.0px;top:316.5px;" width="8" height="8" viewBox="0 0 8 8"><path d="M1 1 L7 7 M7 1 L1 7" stroke="#d0d0d0" stroke-width="1.5" fill="none"/></svg>
<svg style="left:615.5px;top:344.0px;" width="19" height="18" viewBox="0 0 19 18"><g transform="translate(1 0)"><ellipse cx="8" cy="10.6" rx="7.7" ry="5" fill="none" stroke="#fff" stroke-width="1.25"/><path d="M8.5 0.1 L3 3.3 L3 10 L8.5 12.9 L12.9 10 L12.9 3.3 Z" fill="#242424" stroke="#242424" stroke-width="2.2" stroke-linejoin="round"/><path d="M8.7 0.1 L3 3.3 L3 10 L8.7 12.9 Z" fill="#fff"/><path d="M8.7 0.1 L12.9 3.3 L12.9 10 L8.7 12.9 Z" fill="#8f8f8f"/></g></svg>
<svg style="left:615.5px;top:376.0px;" width="19" height="18" viewBox="0 0 19 18"><g transform="translate(1 0)"><ellipse cx="8" cy="10.6" rx="7.7" ry="5" fill="none" stroke="#fff" stroke-width="1.25"/><path d="M8.5 0.1 L3 3.3 L3 10 L8.5 12.9 L12.9 10 L12.9 3.3 Z" fill="#40576f" stroke="#40576f" stroke-width="2.2" stroke-linejoin="round"/><path d="M8.7 0.1 L3 3.3 L3 10 L8.7 12.9 Z" fill="#fff"/><path d="M8.7 0.1 L12.9 3.3 L12.9 10 L8.7 12.9 Z" fill="#9aa9bc"/></g></svg>
<svg style="left:641.5px;top:400.5px;" width="16" height="9" viewBox="0 0 16 9"><path d="M6 1 L2 3 V10 L6 12 Z" fill="#9a9a9a"/><path d="M7.4 1 L10 3 V10 L7.4 12 Z" fill="#6a6a6a"/><path d="M9 6 L13 3.6 L11.4 7 L13.4 7.4 L9.6 10 Z" fill="#8a8a8a"/></svg>
<svg style="left:1124.8px;top:346px;" width="17" height="13" viewBox="0 0 17 13"><rect x="0" y="3.9" width="5.2" height="4.3" rx="1" fill="#fff"/><rect x="11" y="0" width="5.3" height="4.2" rx="1" fill="#fff"/><rect x="11" y="8.1" width="5.3" height="4.2" rx="1" fill="#fff"/><path d="M5 6.1 H7.4 M7.4 2.2 V10.3 M7.4 2.2 H11 M7.4 10.3 H11" stroke="#fff" stroke-opacity=".65" stroke-width="0.7" fill="none"/></svg>
<svg style="left:1156px;top:343px;" width="18" height="18" viewBox="0 0 18 18"><circle cx="8.9" cy="9" r="6.8" fill="none" stroke="#d0d0d0" stroke-width="1.1"/></svg>
<span style="left:1161.6px;top:346.6px;font-size:11.5px;font-weight:bold;color:#e0e0e0;">?</span>
<svg style="left:1190.6px;top:343.8px;" width="15" height="15" viewBox="0 0 15 15"><path d="M0 7.5 H11.2 V13.6 H0 Z" fill="#c0c0c0"/><rect x="5" y="9.3" width="1.6" height="2.6" fill="#242424"/><path d="M7.1 7.6 V4 A3.2 3.4 0 0 1 13.5 4 V5.6" fill="none" stroke="#c0c0c0" stroke-width="1.4"/></svg>
<svg style="left:616.6px;top:423.6px;" width="20" height="20" viewBox="0 0 20 20"><circle cx="7.6" cy="7.6" r="5" fill="none" stroke="#d0d0d0" stroke-width="1.5"/><path d="M11.3 11.3 L15.6 15.8" stroke="#d0d0d0" stroke-width="1.7" stroke-linecap="round"/></svg>
<svg style="left:1146px;top:426px;" width="14" height="14" viewBox="0 0 14 14"><rect width="14" height="14" rx=".8" fill="#d0d0d0"/><rect x="2" y="2.2" width="10" height="2" fill="#242424"/><rect x="2" y="6.1" width="4" height="2" fill="#242424"/><rect x="8" y="6.1" width="4" height="2" fill="#242424"/><rect x="2" y="10" width="4" height="2" fill="#242424"/><rect x="8" y="10" width="4" height="2" fill="#242424"/></svg>
<svg style="left:1173px;top:425px;" width="15" height="15" viewBox="0 0 15 15"><path d="M7.5 0.9 L9.5 5.3 L14.2 5.8 L10.7 9 L11.7 13.8 L7.5 11.4 L3.3 13.8 L4.3 9 L0.8 5.8 L5.5 5.3 Z" fill="#c4c4c4" stroke="#c4c4c4" stroke-width=".5" stroke-linejoin="round"/></svg>
<svg style="left:1196px;top:424px;" width="18" height="18" viewBox="0 0 18 18"><g transform="translate(9 9)"><rect x="-1.25" y="-7.8" width="2.5" height="3.6" rx=".5" transform="rotate(0)" fill="#d0d0d0"/><rect x="-1.25" y="-7.8" width="2.5" height="3.6" rx=".5" transform="rotate(45)" fill="#d0d0d0"/><rect x="-1.25" y="-7.8" width="2.5" height="3.6" rx=".5" transform="rotate(90)" fill="#d0d0d0"/><rect x="-1.25" y="-7.8" width="2.5" height="3.6" rx=".5" transform="rotate(135)" fill="#d0d0d0"/><rect x="-1.25" y="-7.8" width="2.5" height="3.6" rx=".5" transform="rotate(180)" fill="#d0d0d0"/><rect x="-1.25" y="-7.8" width="2.5" height="3.6" rx=".5" transform="rotate(225)" fill="#d0d0d0"/><rect x="-1.25" y="-7.8" width="2.5" height="3.6" rx=".5" transform="rotate(270)" fill="#d0d0d0"/><rect x="-1.25" y="-7.8" width="2.5" height="3.6" rx=".5" transform="rotate(315)" fill="#d0d0d0"/><circle r="5" fill="#d0d0d0"/><circle r="3.1" fill="none" stroke="#242424" stroke-width="0.9"/><circle r="1.3" fill="#909090"/></g></svg>
<svg style="left:612.3px;top:490px;" width="10" height="8" viewBox="0 0 10 8"><path d="M0.3 0.4 L9.7 0.4 L5.0 6.0 Z" fill="#8a8a8a" stroke="#8a8a8a" stroke-width="0.6" stroke-linejoin="round"/></svg>
<svg style="left:612.3px;top:624.8px;" width="10" height="8" viewBox="0 0 10 8"><path d="M0.3 0.4 L9.7 0.4 L5.0 6.0 Z" fill="#8a8a8a" stroke="#8a8a8a" stroke-width="0.6" stroke-linejoin="round"/></svg>
<svg style="left:613.6px;top:650px;" width="8" height="11" viewBox="0 0 8 11"><path d="M0.4 0.4 L6.8 5.2 L0.4 10 Z" fill="#8a8a8a" stroke="#8a8a8a" stroke-width="0.6" stroke-linejoin="round"/></svg>
<svg style="left:691px;top:516.4px;" width="12" height="8" viewBox="0 0 12 8"><path d="M1.6 1.4 L6.2 6 L10.8 1.4" fill="none" stroke="#d8d8d8" stroke-width="1.5"/></svg>
<svg style="left:691px;top:543.4px;" width="12" height="8" viewBox="0 0 12 8"><path d="M1.6 1.4 L6.2 6 L10.8 1.4" fill="none" stroke="#d8d8d8" stroke-width="1.5"/></svg>
<svg style="left:691px;top:570.4px;" width="12" height="8" viewBox="0 0 12 8"><path d="M1.6 1.4 L6.2 6 L10.8 1.4" fill="none" stroke="#d8d8d8" stroke-width="1.5"/></svg>
<svg style="left:722.8px;top:566.2px;" width="15" height="15" viewBox="0 0 15 15"><path d="M0 7.5 H11.2 V13.6 H0 Z" fill="#c0c0c0"/><rect x="5" y="9.3" width="1.6" height="2.6" fill="#242424"/><path d="M7.1 7.6 V4 A3.2 3.4 0 0 1 13.5 4 V5.6" fill="none" stroke="#c0c0c0" stroke-width="1.4"/></svg>
<svg style="left:1180px;top:514px;" width="14" height="12" viewBox="0 0 14 12"><path d="M5.2 1.4 L1.8 4.6 L5.2 7.8 M2 4.6 H9 Q12.4 4.6 12.4 7.8 Q12.4 10.6 9 10.6 H7.6" fill="none" stroke="#d0d0d0" stroke-width="1.4"/></svg>
</div>
</div></body></html>
